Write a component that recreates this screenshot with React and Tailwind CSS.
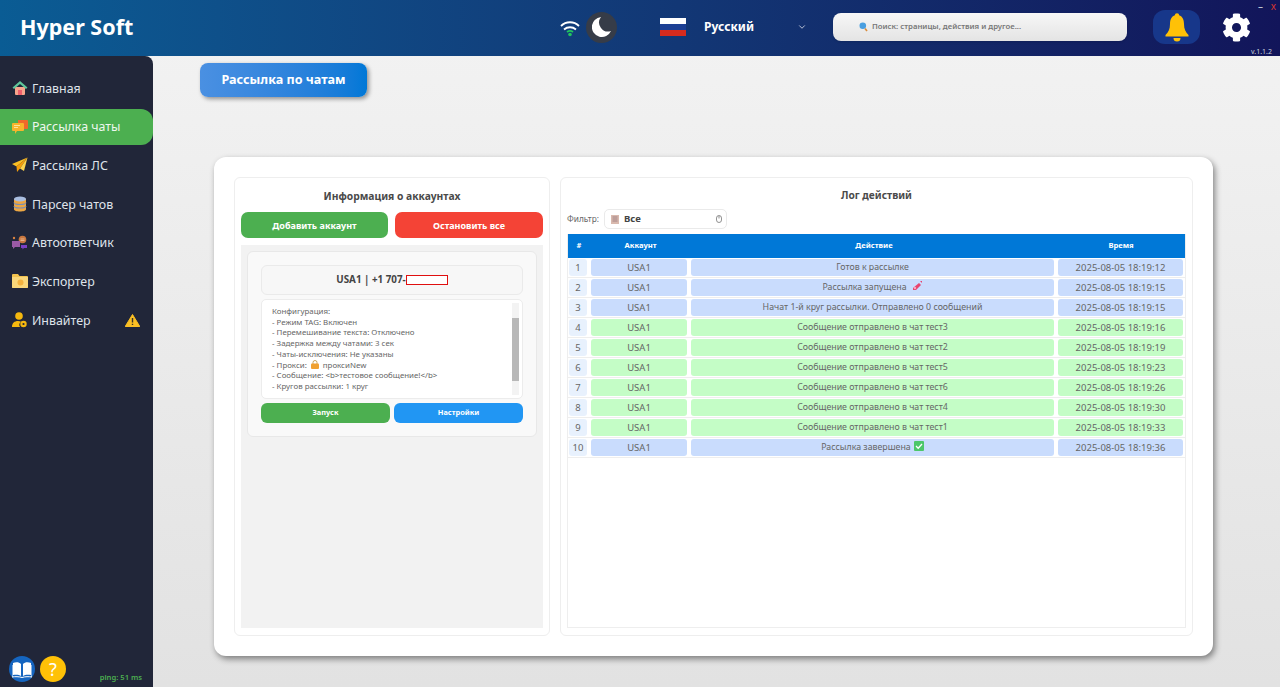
import React from "react";
import { ChevronDown } from "lucide-react";
import { FaCog } from "react-icons/fa";

const HomeIcon = () => (
  <svg width="16" height="16" viewBox="0 0 16 16">
    <path d="M3 7h10v7a1 1 0 0 1-1 1H4a1 1 0 0 1-1-1z" fill="#f7a58c" />
    <path d="M6 10h4v5H6z" fill="#ef5f6c" />
    <path d="M8 1 .5 7.5 2 9l6-5 6 5 1.500-1.500z" fill="#5fc79b" />
  </svg>
);

const ChatIcon = () => (
  <svg width="16" height="16" viewBox="0 0 16 16">
    <path d="M6 1h9a1 1 0 0 1 1 1v7a1 1 0 0 1-1 1H6z" fill="#f0692b" />
    <path d="M1 4h10a1 1 0 0 1 1 1v6a1 1 0 0 1-1 1H5l-2 3v-3H1a1 1 0 0 1-1-1V5a1 1 0 0 1 1-1z" fill="#f7b52c" />
    <path d="M2 6.500h6M2 8.500h4" stroke="#fde39a" strokeWidth="1" />
  </svg>
);

const PlaneIcon = () => (
  <svg width="16" height="16" viewBox="0 0 16 16">
    <path d="M15.500 .5 0 7l4.500 2.500z" fill="#fbbf24" />
    <path d="M15.500 .5 4.500 9.500 5 15l3-3.500z" fill="#f59e0b" />
    <path d="M15.500 .5 8 11.500l4 2.500z" fill="#fcd34d" />
  </svg>
);

const DbIcon = () => (
  <svg width="14" height="16" viewBox="0 0 14 16" className="ml-[1px]">
    <path d="M1 3h12v10.500c0 1-2.700 2-6 2s-6-1-6-2z" fill="#eda743" />
    <ellipse cx="7" cy="3" rx="6" ry="2.500" fill="#a9bde0" />
    <path d="M1 6.500c0 1 2.700 2 6 2s6-1 6-2M1 10c0 1 2.700 2 6 2s6-1 6-2" fill="none" stroke="#7b8fb5" strokeWidth="1.100" />
  </svg>
);

const BotIcon = () => (
  <svg width="16" height="16" viewBox="0 0 16 16">
    <circle cx="10.500" cy="4.500" r="3.800" fill="#c9773f" />
    <path d="M8.500 4h4M8.500 5.500h4" stroke="#f1c19c" strokeWidth=".8" />
    <path d="M0 6h8v6H3l-2 2v-2H0z" fill="#9a5aa5" />
    <path d="M9 10h6v3h-3l-1.500 1.500V13H9z" fill="#7a3fc4" />
    <circle cx="2" cy="3" r="1.200" fill="#d9823f" />
  </svg>
);

const FolderIcon = () => (
  <svg width="16" height="14" viewBox="0 0 16 14">
    <path d="M0 1a1 1 0 0 1 1-1h5l1.500 2H15a1 1 0 0 1 1 1v10a1 1 0 0 1-1 1H1a1 1 0 0 1-1-1z" fill="#f3c24f" />
    <path d="M0 3h16v10a1 1 0 0 1-1 1H1a1 1 0 0 1-1-1z" fill="#fad77a" />
    <circle cx="8.500" cy="8.500" r="3" fill="#f3b23f" />
  </svg>
);

const InviteIcon = () => (
  <svg width="15" height="16" viewBox="0 0 15 16">
    <circle cx="7" cy="4" r="3.800" fill="#f5b80f" />
    <path d="M0 15c0-4 2.500-6 6-6 1.200 0 2.200.2 3 .7A4 4 0 0 0 8 15z" fill="#f5b80f" />
    <circle cx="11.500" cy="12" r="3.200" fill="#f5b80f" />
    <circle cx="11.500" cy="12" r="1.100" fill="#212639" />
  </svg>
);

const Warn = () => (
  <svg width="15" height="13" viewBox="0 0 15 13" className="absolute right-[13px] top-[12px]">
    <path d="M7.500 .5 14.800 12.500H.2z" fill="#fbbf24" stroke="#fbbf24" strokeLinejoin="round" />
    <path d="M7.500 4v4.500M7.500 9.800v1.200" stroke="#3a3323" strokeWidth="1.400" />
  </svg>
);

const navItems = [
  { label: "Главная", icon: <HomeIcon /> },
  { label: "Рассылка чаты", icon: <ChatIcon />, active: true },
  { label: "Рассылка ЛС", icon: <PlaneIcon /> },
  { label: "Парсер чатов", icon: <DbIcon /> },
  { label: "Автоответчик", icon: <BotIcon /> },
  { label: "Экспортер", icon: <FolderIcon /> },
  { label: "Инвайтер", icon: <InviteIcon />, warn: true },
];

const Rocket = () => (
  <svg width="11" height="11" viewBox="0 0 11 11" className="inline-block ml-[5px] align-[-1px]">
    <path d="M1 8 7 3l2 2-5 5H1z" fill="#e8436e" />
    <path d="M8 1l2 0 0 2z" fill="#e8436e" />
    <circle cx="3" cy="8" r="1.200" fill="#f7a8bd" />
  </svg>
);

const Check = () => (
  <svg width="10" height="10" viewBox="0 0 10 10" className="inline-block ml-[3px] align-[-1px]">
    <rect width="10" height="10" rx="1" fill="#4cc76a" />
    <path d="M2 5l2.200 2.200L8 3" fill="none" stroke="#fff" strokeWidth="1.300" />
  </svg>
);

const logRows = [
  { action: "Готов к рассылке", time: "18:19:12" },
  { action: "Рассылка запущена", time: "18:19:15", mark: <Rocket /> },
  { action: "Начат 1-й круг рассылки. Отправлено 0 сообщений", time: "18:19:15" },
  { action: "Сообщение отправлено в чат тест3", time: "18:19:16", sent: true },
  { action: "Сообщение отправлено в чат тест2", time: "18:19:19", sent: true },
  { action: "Сообщение отправлено в чат тест5", time: "18:19:23", sent: true },
  { action: "Сообщение отправлено в чат тест6", time: "18:19:26", sent: true },
  { action: "Сообщение отправлено в чат тест4", time: "18:19:30", sent: true },
  { action: "Сообщение отправлено в чат тест1", time: "18:19:33", sent: true },
  { action: "Рассылка завершена", time: "18:19:36", mark: <Check /> },
];

const configLines = [
  "Конфигурация:",
  "- Режим TAG: Включен",
  "- Перемешивание текста: Отключено",
  "- Задержка между чатами: 3 сек",
  "- Чаты-исключения: Не указаны",
];

const Header = () => (
  <header className="relative h-[56px] shrink-0 flex items-center pb-[2px] bg-gradient-to-r from-[#0a5c94] to-[#12155a] text-white">
    <h1 className="ml-[20px] w-[539px] text-[21.500px] font-bold leading-none">Hyper Soft</h1>
    <svg width="22" height="18" viewBox="0 0 22 18" className="mt-[1px]">
      <path d="M2 7c5-5 13-5 18 0M5 10.500c3.500-3 8.500-3 12 0" fill="none" stroke="#fff" strokeWidth="1.800" />
      <path d="M8 13c1.800-1.300 4.200-1.300 6 0" fill="none" stroke="#22c55e" strokeWidth="1.800" />
      <circle cx="11" cy="15.500" r="1.800" fill="#22c55e" />
    </svg>
    <div className="ml-[5px] w-[31px] h-[31px] rounded-full bg-[#363c48] flex items-center justify-center">
      <svg width="20" height="22" viewBox="0 0 20 22">
        <path d="M9 1a10 10 0 1 0 10 14A9 9 0 0 1 9 1z" fill="#fff" />
      </svg>
    </div>
    <div className="ml-[43px] w-[26px] h-[18px] flex flex-col">
      <div className="h-1/3 bg-white" />
      <div className="h-1/3 bg-[#1c3f94]" />
      <div className="h-1/3 bg-[#d52b1e]" />
    </div>
    <span className="ml-[18px] w-[93px] text-[12px] font-bold">Русский</span>
    <ChevronDown size={10} strokeWidth={2} className="text-[#d7dce8]" />
    <div className="ml-[26px] w-[294px] h-[28px] rounded-[8px] bg-gradient-to-b from-[#f7f7f7] to-[#e4e4e4] flex items-center pl-[26px] shadow-sm">
      <svg width="9" height="10" viewBox="0 0 9 10">
        <circle cx="3.800" cy="3.800" r="3.300" fill="#4a9fe0" />
        <path d="M6 6.500 8 9" stroke="#d98b3a" strokeWidth="1.600" />
      </svg>
      <span className="ml-[4px] text-[7.750px] font-semibold text-[#777]">Поиск: страницы, действия и другое...</span>
    </div>
    <div className="ml-[26px] w-[47px] h-[34px] rounded-[12px] bg-[#17378a] flex items-center justify-center">
      <svg width="26" height="29" viewBox="0 0 26 29">
        <circle cx="13" cy="2.500" r="2.200" fill="#ffc107" />
        <path d="M13 2c-5 0-7 4-7 9 0 5-1.500 8-4.500 11v1.500h23V22c-3-3-4.500-6-4.500-11 0-5-2-9-7-9z" fill="#ffc107" />
        <path d="M9.500 25a3.500 3.500 0 0 0 7 0z" fill="#ffc107" />
      </svg>
    </div>
    <FaCog size={29} className="ml-[22px] text-white" />
    <span className="absolute right-[17px] top-[1px] text-[10px] leading-[11px] text-[#c9d0dc]">–</span>
    <span className="absolute right-[4px] top-[1px] text-[10px] leading-[11px] text-[#d8362f]">x</span>
    <span className="absolute right-[8px] bottom-0 text-[7px] leading-[9px] text-[#c9d0dc]">v.1.1.2</span>
  </header>
);

const Sidebar = () => (
  <aside className="relative w-[153px] shrink-0 rounded-tr-[8px] bg-[#212639] pt-[14px] flex flex-col">
    {navItems.map((item) => (
      <div
        key={item.label}
        className={`relative h-[36px] mb-[2.670px] flex items-center pl-[12px] rounded-r-[12px] text-[12.400px] ${
          item.active ? "bg-[#4caf50] text-[#eef7ee]" : "text-[#dfe3ea]"
        }`}
      >
        <span className="w-[20px] flex justify-start">{item.icon}</span>
        <span className="pt-[2px]">{item.label}</span>
        {item.warn && <Warn />}
      </div>
    ))}
    <div className="mt-auto mb-[5px] flex items-end pl-[9px] pr-[11px]">
      <div className="w-[26px] h-[26px] rounded-full bg-[#1565c0] flex items-center justify-center">
        <svg width="20" height="17" viewBox="0 0 20 17">
          <path d="M1 2c3-1 6-1 8 1v12c-2-1.500-5-1.500-8-1zM19 2c-3-1-6-1-8 1v12c2-1.500 5-1.500 8-1z" fill="#fff" />
          <path d="M0 4v12c3-.5 7-.5 10 .5 3-1 7-1 10-.5V4" fill="none" stroke="#fff" strokeWidth="1" />
        </svg>
      </div>
      <div className="ml-[5px] w-[26px] h-[26px] rounded-full bg-[#ffc107] flex items-center justify-center text-white text-[18px] leading-none">?</div>
      <span className="ml-auto -mb-[1px] text-[7.600px] font-semibold leading-[12px] text-[#4caf50]">ping: 51 ms</span>
    </div>
  </aside>
);

const AccountsPanel = () => (
  <section className="w-[316px] rounded-[6px] border border-[#eeeeee] flex flex-col px-[6px] pb-[7px]">
    <h2 className="h-[34px] flex items-end justify-center pb-[8px] text-[10.300px] font-bold text-[#4a4a4a]">Информация о аккаунтах</h2>
    <div className="flex gap-[7px]">
      <button className="w-[147px] h-[26px] pt-[1px] rounded-[7px] bg-[#4caf50] text-white text-[9px] font-bold">Добавить аккаунт</button>
      <button className="w-[148px] h-[26px] pt-[1px] rounded-[7px] bg-[#f44336] text-white text-[9px] font-bold">Остановить все</button>
    </div>
    <div className="mt-[7px] flex-1 bg-[#f2f2f2] p-[6px]">
      <div className="h-[186px] rounded-[6px] border border-[#e8e8e8] bg-[#f9f9f9] px-[13px] pt-[13px]">
        <div className="h-[30px] rounded-[6px] border border-[#eaeaea] bg-[#f7f7f7] flex items-center justify-center text-[9.800px] font-bold text-[#444]">
          USA1 | +1 707-
          <span className="w-[42px] h-[10px] border border-[#e01010] bg-white" />
        </div>
        <div className="relative mt-[4px] h-[100px] rounded-[5px] border border-[#ececec] bg-white pl-[10px] pt-[6px] text-[7.900px] leading-[10.700px] text-[#666]">
          {configLines.map((line) => (
            <div key={line}>{line}</div>
          ))}
          <div>
            - Прокси:
            <svg width="8" height="9" viewBox="0 0 8 9" className="inline-block mx-[4px] align-[-1px]">
              <path d="M2 4V2.500a2 2 0 0 1 4 0V4" fill="none" stroke="#c9a35a" />
              <rect y="3.500" width="8" height="5.500" rx="1" fill="#f0a030" />
            </svg>
            проксиNew
          </div>
          <div>{"- Сообщение: <b>тестовое сообщение!</b>"}</div>
          <div>- Кругов рассылки: 1 круг</div>
          <div className="absolute right-[3px] top-[3px] bottom-[3px] w-[7px] bg-[#f3f3f3]">
            <div className="mt-[15px] h-[63px] bg-[#b8b8b8]" />
          </div>
        </div>
        <div className="mt-[4px] flex gap-[4px]">
          <button className="flex-1 h-[20px] rounded-[6px] bg-[#4caf50] text-white text-[7.400px] font-bold">Запуск</button>
          <button className="flex-1 h-[20px] rounded-[6px] bg-[#2196f3] text-white text-[7.400px] font-bold">Настройки</button>
        </div>
      </div>
    </div>
  </section>
);

const LogPanel = () => (
  <section className="flex-1 rounded-[6px] border border-[#eeeeee] flex flex-col px-[6px] pb-[7px]">
    <h2 className="h-[31px] flex items-end justify-center pb-[6px] text-[10.200px] font-bold text-[#4a4a4a]">Лог действий</h2>
    <div className="flex items-center h-[20px]">
      <span className="w-[37px] text-[8.300px] text-[#666]">Фильтр:</span>
      <div className="relative w-[123px] h-[20px] rounded-[5px] border border-[#eaeaea] bg-white flex items-center pl-[6px] text-[9.500px] font-bold text-[#444]">
        <svg width="8" height="9" viewBox="0 0 8 9">
          <rect width="8" height="9" fill="#d9b9ae" />
          <path d="M1.500 2h5M1.500 4h5M1.500 6h5" stroke="#8b6f77" strokeWidth=".7" />
        </svg>
        <span className="ml-[5px]">Все</span>
        <svg width="6" height="8" viewBox="0 0 6 8" className="absolute right-[4px] top-[5px]">
          <rect x=".5" y=".5" width="5" height="7" rx="2.500" fill="none" stroke="#777" strokeWidth=".8" />
          <path d="M3 1v2.500" stroke="#777" strokeWidth=".8" />
        </svg>
      </div>
    </div>
    <div className="mt-[5px] flex-1 border border-[#eeeeee] border-t-0">
      <div className="h-[24px] bg-[#0078d7] grid grid-cols-[22px_101px_366px_1fr] items-center text-center text-[7.600px] font-bold text-white">
        <span>#</span>
        <span>Аккаунт</span>
        <span>Действие</span>
        <span>Время</span>
      </div>
      {logRows.map((row, i) => {
        const cell = row.sent ? "bg-[#c4fdc6]" : "bg-[#c9dcfd]";
        return (
          <div key={i} className="h-[20px] px-[1px] grid grid-cols-[18px_96px_363px_125px] gap-[4px] items-center text-center text-[9.500px] text-[#666] border-b border-[#eeeeee]">
            <span className="h-[17px] leading-[17px] rounded-[3px] bg-[#e8f1fd]">{i + 1}</span>
            <span className={`h-[17px] leading-[17px] rounded-[3px] ${cell}`}>USA1</span>
            <span className={`h-[17px] leading-[17px] rounded-[3px] text-[8.800px] ${cell}`}>
              {row.action}
              {row.mark}
            </span>
            <span className={`h-[17px] leading-[17px] rounded-[3px] ${cell}`}>2025-08-05 {row.time}</span>
          </div>
        );
      })}
    </div>
  </section>
);

export default function App() {
  return (
    <div className="h-[687px] w-[1280px] overflow-hidden flex flex-col font-['Noto_Sans',sans-serif] bg-gradient-to-b from-[#f3f3f3] to-[#e2e2e2]">
      <Header />
      <div className="flex flex-1 min-h-0">
        <Sidebar />
        <main className="flex-1 min-w-0">
          <button className="ml-[47px] mt-[7px] w-[167px] h-[34px] pt-[1px] rounded-[8px] bg-gradient-to-r from-[#4a90e2] to-[#0078d7] text-white text-[12.600px] font-bold shadow-[2px_2px_4px_rgba(0,0,0,0.4)]">
            Рассылка по чатам
          </button>
          <div className="ml-[61px] mt-[60px] w-[999px] h-[499px] rounded-[12px] bg-white p-[20px] flex gap-[10px] shadow-[2px_3px_6px_rgba(0,0,0,0.45)]">
            <AccountsPanel />
            <LogPanel />
          </div>
        </main>
      </div>
    </div>
  );
}
